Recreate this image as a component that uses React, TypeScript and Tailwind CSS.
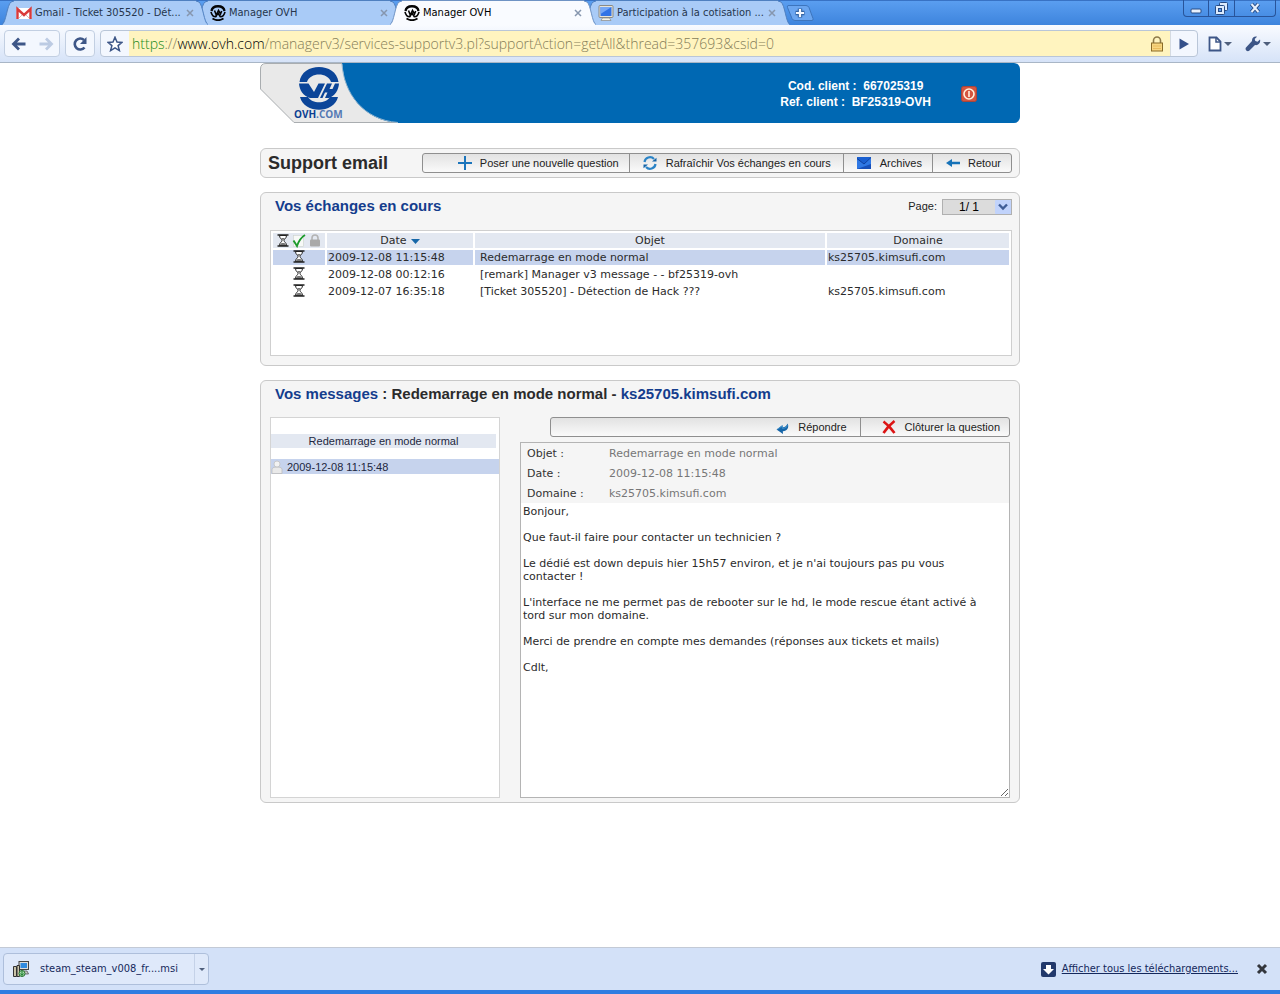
import { useState, type ReactNode } from 'react';

interface BrowserTab {
  title: string;
  icon: 'gmail' | 'ovh' | 'screen';
  active?: boolean;
  layer: string;
}

interface Thread {
  date: string;
  subject: string;
  domain: string;
}

const TABS: BrowserTab[] = [
  { title: 'Gmail - Ticket 305520 - Dét...', icon: 'gmail', layer: 'z-20' },
  { title: 'Manager OVH', icon: 'ovh', layer: 'z-10' },
  { title: 'Manager OVH', icon: 'ovh', active: true, layer: 'z-30' },
  { title: 'Participation à la cotisation ...', icon: 'screen', layer: 'z-20' },
];

const THREADS: Thread[] = [
  { date: '2009-12-08 11:15:48', subject: 'Redemarrage en mode normal', domain: 'ks25705.kimsufi.com' },
  { date: '2009-12-08 00:12:16', subject: '[remark] Manager v3 message - - bf25319-ovh', domain: '' },
  { date: '2009-12-07 16:35:18', subject: '[Ticket 305520] - Détection de Hack ???', domain: 'ks25705.kimsufi.com' },
];

const MESSAGE = `Bonjour,

Que faut-il faire pour contacter un technicien ?

Le dédié est down depuis hier 15h57 environ, et je n'ai toujours pas pu vous contacter !

L'interface ne me permet pas de rebooter sur le hd, le mode rescue étant activé à tord sur mon domaine.

Merci de prendre en compte mes demandes (réponses aux tickets et mails)

Cdlt,`;

/* ---------- Icons ---------- */

function TabIcon({ icon }: { icon: BrowserTab['icon'] }) {
  if (icon === 'gmail') {
    return (
      <svg className="w-4 h-4 shrink-0" viewBox="0 0 16 16">
        <rect x="0.5" y="3" width="15" height="11" rx="1" fill="#fff" />
        <path d="M3 13l4-4M13 13L9 9" stroke="#d8b8b8" strokeWidth="1" />
        <path d="M1.5 14V4L8 10l6.5-6v10" fill="none" stroke="#d93a3a" strokeWidth="2.4" />
      </svg>
    );
  }
  if (icon === 'screen') {
    return (
      <svg className="w-4 h-4 shrink-0" viewBox="0 0 16 16">
        <rect x="1" y="0.5" width="14" height="12" rx="1" fill="#e8e4d8" stroke="#8a8a86" />
        <rect x="2.5" y="2" width="11" height="9" fill="#3273e6" />
        <path d="M2.5 2h11L2.5 9z" fill="#76a7f6" />
        <path d="M3 15.5l1.5-2.5h7l1.5 2.5z" fill="#f5f3ea" stroke="#8a8a86" strokeWidth="0.7" />
      </svg>
    );
  }
  return (
    <svg className="w-4 h-4 shrink-0" viewBox="0 0 16 16" fill="none" stroke="#050505">
      <path d="M1.5 6C2 2.8 4.6 1.3 8 1.3s6 1.500 6.500 4.700" strokeWidth="2.400" />
      <path d="M1 6.800c.8 3.600 2.500 4.900 4.700 4.900L8 8l2.300 3.700c2.200 0 3.900-1.300 4.700-4.900" strokeWidth="1.600" />
      <path d="M4.500 5.500L6.300 10l2.200-4.500L10.500 9l1.200-3" strokeWidth="1.600" />
      <path d="M2.500 13.500c3.500 2.200 7.500 2.200 11 0" strokeWidth="1.800" />
    </svg>
  );
}

function Hourglass() {
  return (
    <svg className="w-3 h-[13px] inline-block align-top" viewBox="0 0 12 13">
      <path d="M2.500 1.500c0 3 2.500 3.500 2.500 5s-2.500 2-2.500 5h7c0-3-2.500-3.500-2.500-5s2.500-2 2.500-5z" fill="#fff" stroke="#222" />
      <path d="M3 11.500c0-2 1.500-2.500 3-2.500s3 .5 3 2.500zM4 4h4L6 6.500z" fill="#777" />
      <path d="M0.500 1h11M0.500 12h11" stroke="#222" strokeWidth="1.600" />
    </svg>
  );
}

function CheckIcon() {
  return (
    <svg className="w-[14px] h-[14px]" viewBox="0 0 14 14">
      <rect x="1.500" y="1.500" width="10" height="11" fill="#f7f9f7" stroke="#ccd3cc" strokeWidth="0.600" />
      <path d="M1.500 6.500l3.500 5.500C6.500 7.500 9 3.500 13 1" fill="none" stroke="#1c9a2c" strokeWidth="1.900" />
    </svg>
  );
}

function GreyLock() {
  return (
    <svg className="w-3 h-[13px]" viewBox="0 0 12 13">
      <path d="M3 6V4a3 3 0 016 0v2" fill="none" stroke="#b3b3b3" strokeWidth="1.600" />
      <rect x="1" y="5.500" width="10" height="7" rx="1" fill="#a9a9a9" />
    </svg>
  );
}

function PlusIcon() {
  return (
    <svg className="w-4 h-4" viewBox="0 0 16 16">
      <path d="M8 1v14M1 8h14" stroke="#1b75bc" strokeWidth="2" />
    </svg>
  );
}

function RefreshIcon() {
  return (
    <svg className="w-4 h-4" viewBox="0 0 16 16">
      <path d="M2.500 7A5.500 5.500 0 0112 4M13.500 9A5.500 5.500 0 014 12" fill="none" stroke="#2a83c6" strokeWidth="2.200" />
      <path d="M10 6.500h4.500V2.800zM6 9.500H1.500v3.700z" fill="#1464a8" />
    </svg>
  );
}

function ArchiveIcon() {
  return (
    <svg className="w-4 h-4" viewBox="0 0 16 16">
      <rect x="1" y="2" width="14" height="12" fill="#1a5fd0" />
      <path d="M1 4l7 4.500L15 2v12H1z" fill="#2f78e4" />
      <path d="M1 3.500l7 5.500 7-6.500" fill="none" stroke="#0d3f9c" />
      <path d="M1 14l14-5v5z" fill="#174fb8" />
    </svg>
  );
}

function BackArrow() {
  return (
    <svg className="w-4 h-4" viewBox="0 0 16 16">
      <path d="M1 8l6-4v2.800h8v2.400H7V12z" fill="#1672b8" />
    </svg>
  );
}

function ReplyIcon() {
  return (
    <svg className="w-4 h-4" viewBox="0 0 16 16">
      <path d="M1.500 10.500L7.500 6l.3 2.300c2.300-.2 3.900-1.300 4.700-3.800 2 4-.2 7.300-4.700 7.700l.2 2.800z" fill="#1565a8" />
      <path d="M2.500 10.300l4.500-3.300.3 2.300c3 0 4.700-1.300 5.500-3" fill="none" stroke="#4ea0d8" strokeWidth="0.800" />
    </svg>
  );
}

function CloseQuestionIcon() {
  return (
    <svg className="w-4 h-4" viewBox="0 0 16 16">
      <path d="M2.500 2.500C6 5 11 10.500 13.500 14M13.500 2C9 5.500 5 10 2.500 14" stroke="#dc1414" strokeWidth="2.600" fill="none" />
    </svg>
  );
}

function PersonIcon() {
  return (
    <svg className="w-3 h-[14px] shrink-0" viewBox="0 0 12 14">
      <path d="M1 13.500V9.500c0-1.500 1.500-2.500 5-2.500s5 1 5 2.500v4z" fill="#e9e9e9" stroke="#bbb" strokeWidth="0.800" />
      <circle cx="6" cy="4" r="3" fill="#f2f2f2" stroke="#c2c2c2" strokeWidth="0.800" />
    </svg>
  );
}

function CaretDown() {
  return (
    <svg className="w-2 h-1" viewBox="0 0 8 4">
      <path d="M0 0h8L4 4z" fill="#4f5f7c" />
    </svg>
  );
}

/* ---------- Browser frame ---------- */

function TabItem({ tab }: { tab: BrowserTab }) {
  const fill = tab.active ? '#f9fbff' : '#a9cbf7';
  const line = tab.active ? '#6f93c4' : '#4f80c0';

  return (
    <div className={`relative flex flex-1 max-w-[206px] min-w-0 -mr-3 ${tab.layer}`}>
      <svg className="w-3 h-[25px] shrink-0" viewBox="0 0 12 25">
        <path d="M0 25C4 23 5 5 9 2L12 1V25z" fill={fill} />
        <path d="M0 24.500C4 23 5 5 9 2L12 1" fill="none" stroke={line} />
      </svg>
      <div
        className={`flex flex-1 min-w-0 items-center border-t pl-[2px] text-[11px] ${
          tab.active
            ? 'bg-[#f9fbff] border-[#6f93c4] text-black'
            : 'bg-[#a9cbf7] border-[#4f80c0] text-[#26364d]'
        }`}
      >
        <TabIcon icon={tab.icon} />
        <a href="#" className="ml-[3px] flex-1 whitespace-nowrap">{tab.title}</a>
        <button type="button" aria-label="Fermer l'onglet" className="shrink-0 mr-[2px]">
          <svg className="w-2 h-2" viewBox="0 0 8 8">
            <path d="M1 1l6 6M7 1L1 7" stroke="#8696ae" strokeWidth="1.500" />
          </svg>
        </button>
      </div>
      <svg className="w-3 h-[25px] shrink-0" viewBox="0 0 12 25">
        <path d="M12 25C8 23 7 5 3 2L0 1V25z" fill={fill} />
        <path d="M12 24.500C8 23 7 5 3 2L0 1" fill="none" stroke={line} />
      </svg>
    </div>
  );
}

function TabStrip() {
  return (
    <div className="flex justify-between bg-linear-to-b from-[#5a9ef0] to-[#3d84dd] h-[25px] border-t border-[#3872c4]">
      <div className="flex flex-1 min-w-0 pl-[2px] -mt-px">
        {TABS.map((tab, i) => (
          <TabItem key={i} tab={tab} />
        ))}
        <button type="button" aria-label="Nouvel onglet" className="ml-2 mt-[5px] self-start">
          <svg className="w-7 h-4" viewBox="0 0 28 16">
            <path d="M2 .5h18q2 0 3 2l4 11q.5 2-1 2H9q-2 0-3-2L1.500 2.500Q1 .5 2 .5z" fill="#6ba6f0" stroke="#3d75bd" />
            <path d="M14 3.500v9M9.500 8h9" stroke="#3465a4" strokeWidth="4.500" />
            <path d="M14 4v8M10 8h8" stroke="#f4f8ff" strokeWidth="2.200" />
          </svg>
        </button>
      </div>
      <div className="flex h-[17px] mr-1 -mt-px shrink-0 rounded-b border border-t-0 border-[#28549a] divide-x divide-[#28549a]">
        <button type="button" aria-label="Réduire" className="w-[25px] flex justify-center items-center">
          <svg className="w-3 h-3" viewBox="0 0 12 12">
            <rect x="1" y="7" width="10" height="4" rx="1" fill="#e8f1fd" stroke="#274c86" />
          </svg>
        </button>
        <button type="button" aria-label="Restaurer" className="w-[26px] flex justify-center items-center">
          <svg className="w-[13px] h-[13px]" viewBox="0 0 13 13" fill="#dcebfd" stroke="#274c86">
            <rect x="4.500" y="0.500" width="8" height="8" rx="1" />
            <rect x="0.500" y="3.500" width="9" height="9" rx="1" />
            <rect x="3.500" y="6.500" width="3" height="3" fill="#5b9bee" />
          </svg>
        </button>
        <button type="button" aria-label="Fermer" className="w-[40px] flex justify-center items-center">
          <svg className="w-3 h-3" viewBox="0 0 12 12">
            <path d="M2.500 2l7 8M9.500 2l-7 8" stroke="#274c86" strokeWidth="4" />
            <path d="M2.500 2l7 8M9.500 2l-7 8" stroke="#e8f1fd" strokeWidth="2" />
          </svg>
        </button>
      </div>
    </div>
  );
}

function AddressBar() {
  return (
    <div className="flex items-center h-[38px] px-1 bg-linear-to-b from-[#f9fbff] to-[#d6e3f8] border-b border-[#a9b6c6]">
      <div className="flex h-[27px] w-14 rounded border border-[#c2cfe2] bg-[#f3f7fe]">
        <button type="button" aria-label="Page précédente" className="flex-1 flex items-center justify-center">
          <svg className="w-4 h-4" viewBox="0 0 16 16">
            <path d="M14.500 8H3M8 2.500L2.500 8 8 13.500" fill="none" stroke="#3d5687" strokeWidth="2.800" />
          </svg>
        </button>
        <button type="button" aria-label="Page suivante" className="flex-1 flex items-center justify-center">
          <svg className="w-4 h-4" viewBox="0 0 16 16">
            <path d="M1.500 8H13M8 2.500L13.500 8 8 13.500" fill="none" stroke="#bccbe3" strokeWidth="2.800" />
          </svg>
        </button>
      </div>
      <button
        type="button"
        aria-label="Actualiser"
        className="ml-[5px] flex h-[27px] w-[30px] items-center justify-center rounded border border-[#c2cfe2] bg-[#f3f7fe]"
      >
        <svg className="w-4 h-4" viewBox="0 0 16 16">
          <path d="M12.500 11.500A5.500 5.500 0 1112 4" fill="none" stroke="#3d5687" strokeWidth="2.600" />
          <path d="M14.500 1v7H8z" fill="#3d5687" />
        </svg>
      </button>
      <div className="ml-[5px] flex flex-1 min-w-0 h-[27px] rounded border border-[#b9c6d8] bg-[#f3f7fe]">
        <button type="button" aria-label="Favori" className="w-7 flex items-center justify-center">
          <svg className="w-4 h-4" viewBox="0 0 16 16">
            <path d="M8 1.200l2 4.800 5 .4-3.900 3.200 1.300 5L8 11.900l-4.400 2.700 1.300-5L1 6.400 6 6z" fill="#fff" stroke="#3d5687" strokeWidth="1.500" />
          </svg>
        </button>
        <a
          href="#"
          className="flex flex-1 items-center min-w-0 pl-[3px] bg-[#fff4bf] text-[14px] font-light text-[#857d58] whitespace-nowrap overflow-hidden font-['Open_Sans','Noto_Sans',sans-serif]"
        >
          <span className="text-[#1b8a1b]">https</span>://<span className="text-black">www.ovh.com</span>
          <span>/managerv3/services-supportv3.pl?supportAction=getAll&amp;thread=357693&amp;csid=0</span>
        </a>
        <div className="flex items-center pr-[6px] bg-[#fff4bf]">
          <svg className="w-[14px] h-4" viewBox="0 0 14 16">
            <path d="M3.500 8V4.500a3.500 3.500 0 017 0V8" fill="none" stroke="#8d7a4a" strokeWidth="1.600" />
            <rect x="1.500" y="7" width="11" height="8" fill="#f7d680" stroke="#8a6b28" />
            <path d="M3 10h8M3 12.500h8" stroke="#e9bb5c" />
          </svg>
        </div>
        <button type="button" aria-label="Aller" className="w-[27px] flex items-center justify-center border-l border-[#d5dbe2]">
          <svg className="w-3 h-3" viewBox="0 0 12 12">
            <path d="M1.500 0.500L11 6l-9.500 5.500z" fill="#34508a" />
          </svg>
        </button>
      </div>
      <button type="button" aria-label="Page actuelle" className="ml-[10px] w-[25px] flex items-center gap-[2px]">
        <svg className="w-[14px] h-4" viewBox="0 0 14 16">
          <path d="M1.500 1.500h7l4 4v9h-11z" fill="#fff" stroke="#3d5687" strokeWidth="1.800" />
          <path d="M8 1.500V6h4.500" fill="none" stroke="#3d5687" strokeWidth="1.500" />
        </svg>
        <CaretDown />
      </button>
      <button type="button" aria-label="Outils" className="ml-3 mr-[5px] flex items-center gap-[2px]">
        <svg className="w-4 h-4" viewBox="0 0 16 16">
          <path d="M15 3.500l-2.500 2.300-2.200-.8-.6-2L12 .8C9.500 0 6.700 2 7 5L1 11.500c-1.500 2 1.200 4.700 3.200 3.200L10 9c3.200.8 6-2.200 5-5.500z" fill="#3d5687" />
        </svg>
        <CaretDown />
      </button>
    </div>
  );
}

function DownloadShelf() {
  return (
    <footer className="border-t border-[#c3cad6] border-b-4 border-b-[#2f7de1] bg-[#d3e1f8] text-[11px] text-[#14285c]">
      <div className="flex items-center justify-between h-[42px] pl-[3px] pr-3">
        <div className="flex h-8 w-[206px] rounded border border-[#aebfdb] bg-[#dfe9fa]">
          <button type="button" className="flex flex-1 min-w-0 items-center pl-[9px]">
            <svg className="w-4 h-4 shrink-0" viewBox="0 0 16 16">
              <rect x="6" y="0.500" width="9.500" height="8" fill="#ddd" stroke="#444" />
              <rect x="7.500" y="2" width="6.500" height="5" fill="#2f8ae0" />
              <path d="M0.500 5.500h3v10h-3zM4 4.500h2.500v11H4z" fill="#c9c3a8" stroke="#333" />
              <path d="M8 10h6l1.500 3H7z" fill="#c8c8c8" stroke="#444" strokeWidth="0.700" />
              <circle cx="9" cy="12.500" r="3" fill="#aee0ae" stroke="#22702c" />
              <path d="M9 10v4M7.500 12.500L9 14.500l1.500-2" stroke="#15782a" fill="none" />
            </svg>
            <span className="ml-[11px]">steam_steam_v008_fr....msi</span>
          </button>
          <button type="button" aria-label="Options" className="w-[14px] flex items-center justify-center border-l border-[#c5d2e8]">
            <svg className="w-[6px] h-[3px]" viewBox="0 0 6 3">
              <path d="M0 0h6L3 3z" fill="#4f5f7c" />
            </svg>
          </button>
        </div>
        <div className="flex items-center">
          <svg className="w-[15px] h-[15px] mr-[6px]" viewBox="0 0 15 15">
            <rect width="15" height="15" rx="2" fill="#22396c" />
            <path d="M5 3h5v4h3l-5.500 5.500L2 7h3z" fill="#fff" />
          </svg>
          <a href="#" className="underline">Afficher tous les téléchargements...</a>
          <button type="button" aria-label="Fermer" className="ml-[18px]">
            <svg className="w-3 h-3" viewBox="0 0 12 12">
              <path d="M2 2l8 8M10 2l-8 8" stroke="#33363d" strokeWidth="3" />
            </svg>
          </button>
        </div>
      </div>
    </footer>
  );
}

/* ---------- Manager page ---------- */

function Header() {
  return (
    <header className="flex items-center justify-between h-[60px] rounded-md bg-[#0068b3] text-white">
      <svg className="w-[140px] h-[60px] shrink-0" viewBox="0 0 140 60">
        <path d="M0 0h84v60H0z" fill="#fff" />
        <path d="M.5 26V6Q.5 1 6 1H82C84 30 103 57 138 59.500H34z" fill="#e9e9e9" />
        <path d="M82 0C84 30 103 57 138 60H140V0z" fill="#0068b3" />
        <path d="M138 59.500H34L.5 26V6Q.5 .5 6 .5H82" fill="none" stroke="#a9adb0" />
        <path d="M82 1C84 30 103 57 138 59.500" fill="none" stroke="#8fb4cf" />
        <path d="M39.500 19C42-1 76-1 78.500 19H71C68 9 50 9 47 19z" fill="#0b4599" />
        <path d="M40 34h8c4 7 18 7 22 0h8C74 51 44 51 40 34z" fill="#0b4599" />
        <path d="M39 20.500h9.500L54 29l4.500-8.500H65L58 35h-8C43 33 39.500 27 39 20.500z" fill="#0b4599" />
        <path d="M67 20.500h5L69.500 26h3l2.500-5.500h4C78.500 27 75 33 69 35h-4l2.500-5.500h-2.500L62.500 35H60z" fill="#0b4599" />
        <text x="34" y="55" fontSize="10" fontWeight="bold" fontFamily="Open Sans, sans-serif" fill="#0b3f92">
          OVH<tspan fill="#5579b4">.COM</tspan>
        </text>
      </svg>
      <div className="flex items-center pr-[43px] pt-[2px]">
        <p className="text-center text-[12px] leading-4 font-bold whitespace-pre">
          Cod. client :  667025319{'\n'}Ref. client :  BF25319-OVH
        </p>
        <button type="button" aria-label="Déconnexion" className="ml-[30px]">
          <svg className="w-4 h-4" viewBox="0 0 16 16">
            <rect x="0.500" y="0.500" width="15" height="15" rx="2" fill="#d5553f" stroke="#a9453a" />
            <circle cx="8" cy="8" r="5" fill="none" stroke="#fff3df" strokeWidth="1.600" />
            <path d="M8 5v6" stroke="#fff3df" strokeWidth="1.600" />
          </svg>
        </button>
      </div>
    </header>
  );
}

function ToolButton({ icon, label, className }: { icon: ReactNode; label: string; className: string }) {
  return (
    <button type="button" className={`flex items-center h-full whitespace-nowrap ${className}`}>
      {icon}
      {label}
    </button>
  );
}

function Panel({ children, className = '' }: { children: ReactNode; className?: string }) {
  return <section className={`rounded-md border border-[#c9c9c9] bg-[#f5f5f5] ${className}`}>{children}</section>;
}

function ThreadTable() {
  const [selected, setSelected] = useState(0);

  return (
    <div className="min-h-[126px] bg-white border border-[#cfcfcf]">
      <table className="w-full table-fixed border-separate border-spacing-[2px] font-['DejaVu_Sans',sans-serif] text-[11px] leading-[15px] text-[#2b2b2b]">
        <colgroup>
          <col className="w-[52px]" />
          <col className="w-[146px]" />
          <col />
          <col className="w-[182px]" />
        </colgroup>
        <thead>
          <tr className="*:bg-[#e3e8f1] *:font-normal *:p-0">
            <th>
              <div className="flex items-center justify-center gap-[3px]">
                <Hourglass />
                <CheckIcon />
                <GreyLock />
              </div>
            </th>
            <th>
              Date
              <svg className="inline-block w-[9px] h-[5px] ml-1" viewBox="0 0 9 5">
                <path d="M0 0h9L4.500 5z" fill="#1667a8" />
              </svg>
            </th>
            <th>Objet</th>
            <th>Domaine</th>
          </tr>
        </thead>
        <tbody>
          {THREADS.map((thread, i) => (
            <tr
              key={thread.date}
              onClick={() => setSelected(i)}
              className={`cursor-pointer *:p-0 *:h-[15px] ${i === selected ? '*:bg-[#c6d3ed]' : '*:bg-white'}`}
            >
              <td className="text-center"><Hourglass /></td>
              <td><span className="pl-px">{thread.date}</span></td>
              <td><span className="pl-[5px]">{thread.subject}</span></td>
              <td><span className="pl-px">{thread.domain}</span></td>
            </tr>
          ))}
        </tbody>
      </table>
    </div>
  );
}

function Messages() {
  const details = [
    ['Objet :', 'Redemarrage en mode normal'],
    ['Date :', '2009-12-08 11:15:48'],
    ['Domaine :', 'ks25705.kimsufi.com'],
  ];

  return (
    <div className="flex gap-5 mt-[13px]">
      <div className="w-[230px] shrink-0 bg-white border border-[#d4d4d4] pt-4 text-[11px] leading-[14px] text-[#1d2740]">
        <p className="mr-[3px] bg-[#e3e8f1] text-center">Redemarrage en mode normal</p>
        <a href="#" className="mt-[11px] h-[15px] flex items-center gap-1 bg-[#c6d3ed]">
          <PersonIcon />
          2009-12-08 11:15:48
        </a>
      </div>
      <div className="flex-1 min-w-0">
        <div className="ml-[30px] flex justify-end h-5 rounded-[3px] border border-[#8f8f8f] bg-linear-to-b from-[#e2e2e2] to-[#fafafa] text-[11px] text-[#222]">
          <ToolButton icon={<ReplyIcon />} label="Répondre" className="gap-[7px] pr-[13px]" />
          <ToolButton icon={<CloseQuestionIcon />} label="Clôturer la question" className="gap-2 pl-5 pr-[9px] border-l border-[#8f8f8f]" />
        </div>
        <div className="mt-[5px] border border-[#b4b4b4] font-['DejaVu_Sans',sans-serif] text-[11px]">
          <dl className="grid grid-cols-[82px_1fr] pl-[6px] leading-5">
            {details.map(([label, value]) => (
              <div key={label} className="contents">
                <dt className="text-[#333] h-5 pt-px">{label}</dt>
                <dd className="text-[#777] h-5 pt-px">{value}</dd>
              </div>
            ))}
          </dl>
          <textarea
            aria-label="Message"
            readOnly
            defaultValue={MESSAGE}
            className="block w-full h-[294px] bg-white pl-[2px] pr-4 py-[2px] leading-[13px] text-[#2b2b2b] outline-none resize"
          />
        </div>
      </div>
    </div>
  );
}

export default function App() {
  return (
    <div className="flex flex-col min-h-screen bg-white font-['DejaVu_Sans_Condensed','DejaVu_Sans',sans-serif]">
      <TabStrip />
      <AddressBar />

      <main className="flex-1 w-full max-w-[760px] mx-auto font-['Liberation_Sans',Arial,sans-serif]">
        <Header />

        <Panel className="mt-[25px] h-[30px] flex items-center justify-between px-[7px]">
          <h1 className="text-[18px] font-bold text-[#2b2b2b]">Support email</h1>
          <nav className="flex justify-end h-5 w-[590px] rounded-[3px] border border-[#8f8f8f] bg-linear-to-b from-[#e2e2e2] to-[#fafafa] text-[11px] text-[#222] divide-x divide-[#8f8f8f]">
            <ToolButton icon={<PlusIcon />} label="Poser une nouvelle question" className="gap-[7px] pr-[10px]" />
            <ToolButton icon={<RefreshIcon />} label="Rafraîchir Vos échanges en cours" className="gap-2 px-3" />
            <ToolButton icon={<ArchiveIcon />} label="Archives" className="gap-2 pl-3 pr-[10px]" />
            <ToolButton icon={<BackArrow />} label="Retour" className="gap-[7px] pl-3 pr-[10px]" />
          </nav>
        </Panel>

        <Panel className="mt-[14px] pl-[9px] pr-[7px] pb-[9px]">
          <div className="flex items-center justify-between h-[27px] pl-[5px] mb-[10px]">
            <h2 className="text-[15px] font-bold text-[#143d8d]">Vos échanges en cours</h2>
            <div className="flex items-center gap-[5px] text-[11px] text-[#222]">
              <label htmlFor="page">Page:</label>
              <span className="relative flex">
                <select
                  id="page"
                  className="appearance-none w-[70px] h-4 pl-4 bg-[#dcdcdc] border border-[#b0b0b0] text-[12px] leading-none text-black"
                >
                  <option>1/ 1</option>
                </select>
                <svg className="absolute right-px top-px w-4 h-[14px] pointer-events-none" viewBox="0 0 16 14">
                  <rect width="16" height="14" rx="1" fill="#c1d3fb" />
                  <path d="M4 4.500l4 4 4-4" fill="none" stroke="#3f5d96" strokeWidth="2.400" />
                </svg>
              </span>
            </div>
          </div>
          <ThreadTable />
        </Panel>

        <Panel className="mt-[14px] px-[9px] pb-1">
          <h2 className="pl-[5px] pt-[3px] text-[15px] leading-5 font-bold text-[#143d8d]">
            Vos messages <span className="text-[#2b2b2b]">: Redemarrage en mode normal -</span> ks25705.kimsufi.com
          </h2>
          <Messages />
        </Panel>
      </main>

      <DownloadShelf />
    </div>
  );
}
